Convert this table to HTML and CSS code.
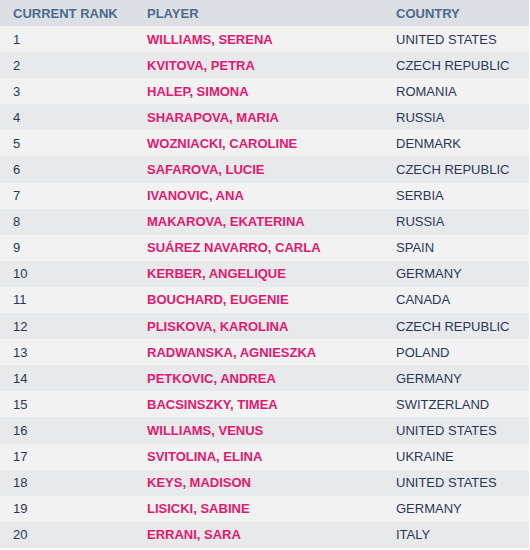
FILE: index.html
```html
<!DOCTYPE html>
<html>
<head>
<meta charset="utf-8">
<link rel="stylesheet" href="styles.css">
</head>
<body>
<table class="rankings">
  <thead>
    <tr><th class="c-rank">CURRENT RANK</th><th class="c-player">PLAYER</th><th class="c-country">COUNTRY</th></tr>
  </thead>
  <tbody>
    <tr><td>1</td><td class="player">WILLIAMS, SERENA</td><td>UNITED STATES</td></tr>
    <tr><td>2</td><td class="player">KVITOVA, PETRA</td><td>CZECH REPUBLIC</td></tr>
    <tr><td>3</td><td class="player">HALEP, SIMONA</td><td>ROMANIA</td></tr>
    <tr><td>4</td><td class="player">SHARAPOVA, MARIA</td><td>RUSSIA</td></tr>
    <tr><td>5</td><td class="player">WOZNIACKI, CAROLINE</td><td>DENMARK</td></tr>
    <tr><td>6</td><td class="player">SAFAROVA, LUCIE</td><td>CZECH REPUBLIC</td></tr>
    <tr><td>7</td><td class="player">IVANOVIC, ANA</td><td>SERBIA</td></tr>
    <tr><td>8</td><td class="player">MAKAROVA, EKATERINA</td><td>RUSSIA</td></tr>
    <tr><td>9</td><td class="player">SUÁREZ NAVARRO, CARLA</td><td>SPAIN</td></tr>
    <tr><td>10</td><td class="player">KERBER, ANGELIQUE</td><td>GERMANY</td></tr>
    <tr><td>11</td><td class="player">BOUCHARD, EUGENIE</td><td>CANADA</td></tr>
    <tr><td>12</td><td class="player">PLISKOVA, KAROLINA</td><td>CZECH REPUBLIC</td></tr>
    <tr><td>13</td><td class="player">RADWANSKA, AGNIESZKA</td><td>POLAND</td></tr>
    <tr><td>14</td><td class="player">PETKOVIC, ANDREA</td><td>GERMANY</td></tr>
    <tr><td>15</td><td class="player">BACSINSZKY, TIMEA</td><td>SWITZERLAND</td></tr>
    <tr><td>16</td><td class="player">WILLIAMS, VENUS</td><td>UNITED STATES</td></tr>
    <tr><td>17</td><td class="player">SVITOLINA, ELINA</td><td>UKRAINE</td></tr>
    <tr><td>18</td><td class="player">KEYS, MADISON</td><td>UNITED STATES</td></tr>
    <tr><td>19</td><td class="player">LISICKI, SABINE</td><td>GERMANY</td></tr>
    <tr><td>20</td><td class="player">ERRANI, SARA</td><td>ITALY</td></tr>
  </tbody>
</table>
</body>
</html>
```

FILE: styles.css
```css
html, body {
  margin: 0;
  padding: 0;
  background: #ffffff;
}
.rankings {
  width: 529px;
  border-collapse: collapse;
  table-layout: fixed;
  font-family: "Liberation Sans", Arial, sans-serif;
  font-size: 13px;
}
.rankings th,
.rankings td {
  padding: 0 0 0 13px;
  text-align: left;
  white-space: nowrap;
}
.rankings th {
  height: 26px;
  background: #dcdfe3;
  color: #4b6a8d;
  font-weight: bold;
}
.rankings td {
  height: 26.1px;
  color: #2a3658;
}
.c-rank { width: 121px; }
.c-player { width: 236px; }
.rankings tbody tr:nth-child(odd) { background: #f2f2f2; }
.rankings tbody tr:nth-child(even) { background: #e8e9eb; }
.rankings td.player {
  color: #e4186f;
  font-weight: bold;
}
```
